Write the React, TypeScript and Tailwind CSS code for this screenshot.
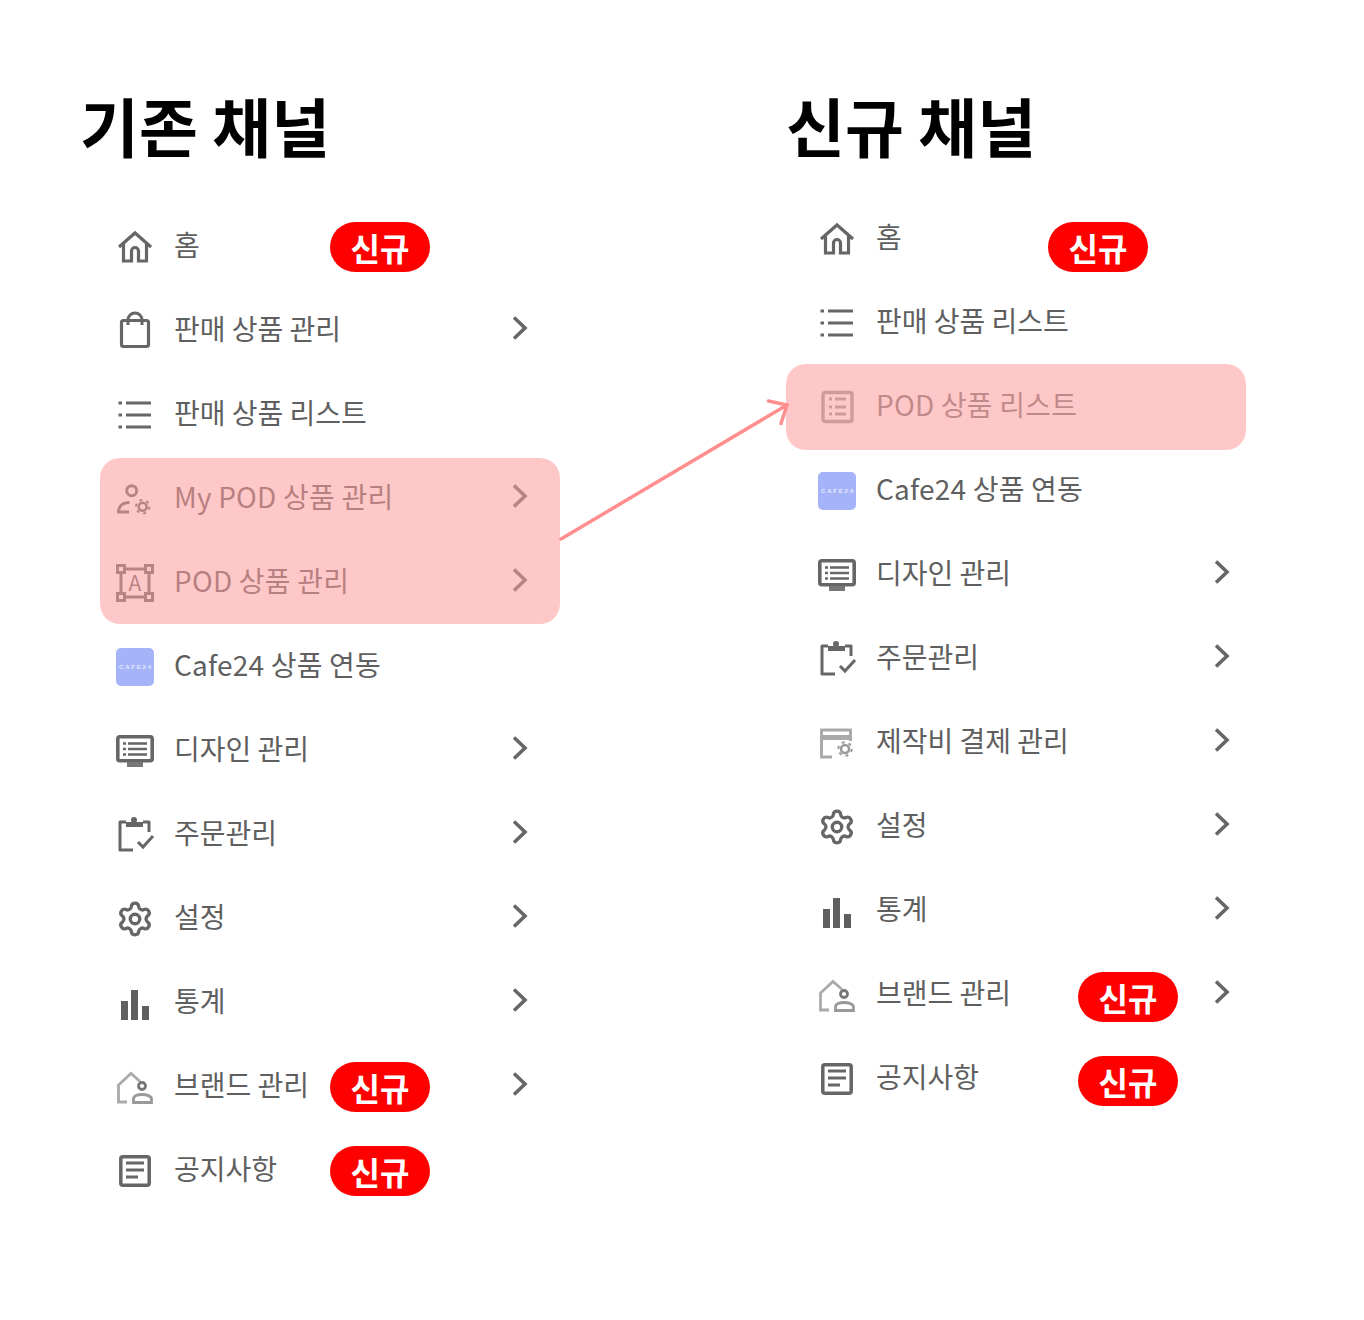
import React from "react";
import { Settings } from "lucide-react";

const S = ({ children, className = "" }: { children: React.ReactNode; className?: string }) => (
  <svg viewBox="0 0 38 38" className={`w-[38px] h-[38px] shrink-0 overflow-visible ${className}`} fill="none" stroke="#666" strokeWidth="3">
    {children}
  </svg>
);

const Cog = ({ cx, cy, color }: { cx: number; cy: number; color: string }) => (
  <g stroke={color}>
    <circle cx={cx} cy={cy} r="4" strokeWidth="2.600" />
    <circle cx={cx} cy={cy} r="6.700" strokeWidth="2" strokeDasharray="3 4.020" />
  </g>
);

const Home = () => (
  <S>
    <path d="M3 19 19 5 35 19M7.500 16v17h8V23a3.500 3.500 0 0 1 7 0v10h8V16" strokeWidth="3.200" />
  </S>
);
const Bag = () => (
  <S>
    <rect x="5.500" y="8.500" width="27" height="26" rx="2" strokeWidth="3.200" />
    <path d="M12 13V8a7 7 0 0 1 14 0v5" strokeWidth="3" />
  </S>
);
const ListI = () => (
  <S>
    <path d="M10 7h25M10 19h25M10 31h25" strokeWidth="3.200" />
    <path d="M2.500 7h3.500M2.500 19h3.500M2.500 31h3.500" strokeWidth="3.200" />
  </S>
);
const UserGear = () => (
  <S>
    <circle cx="15.700" cy="10.700" r="5" strokeWidth="3" />
    <path d="M13 32H2.500c0-6 4.500-9.500 11-9.500" strokeWidth="3" />
    <Cog cx={26.700} cy={26.700} color="#666" />
  </S>
);
const FrameA = () => (
  <S>
    <g strokeWidth="3">
      <rect x="1.500" y="1.500" width="7" height="7" />
      <rect x="29.500" y="1.500" width="7" height="7" />
      <rect x="1.500" y="29.500" width="7" height="7" />
      <rect x="29.500" y="29.500" width="7" height="7" />
      <path d="M9 5h20M9 33h20M5 9v20M33 9v20" />
    </g>
    <text x="19" y="26.500" textAnchor="middle" fontSize="21" fill="#666" stroke="none" fontFamily="'Noto Sans CJK KR',sans-serif">A</text>
  </S>
);
const Cafe = () => (
  <S>
    <rect x="0" y="0" width="38" height="38" rx="5" fill="#a5b4f8" stroke="none" />
    <text x="3" y="21" textLength="32" lengthAdjust="spacing" fontSize="6" fontWeight="700" fill="#e6eafe" stroke="none" fontFamily="'Liberation Sans',sans-serif">CAFE24</text>
  </S>
);
const Monitor = () => (
  <S>
    <rect x="1.800" y="4.800" width="34.400" height="24" rx="2" strokeWidth="3.600" />
    <rect x="11" y="30" width="16" height="5" fill="#777" stroke="none" />
    <path d="M12 11.500h19M12 17h19M12 22.500h19M7 11.500h3M7 17h3M7 22.500h3" strokeWidth="2.500" />
  </S>
);
const Clip = () => (
  <S>
    <path d="M10 6H4v28h13M27 6h6v10" strokeWidth="3" strokeLinejoin="round" />
    <path d="M10 6h17v5H10z" fill="#666" stroke="none" />
    <circle cx="18" cy="4" r="3" fill="#666" stroke="none" />
    <path d="m22 26 5 5 10-11" strokeWidth="3" />
  </S>
);
const Gear = () => <Settings size={38} color="#666" strokeWidth={2.100} className="shrink-0" />;
const Bars = () => (
  <S>
    <rect x="5" y="17" width="7" height="19" fill="#5f5f5f" stroke="none" />
    <rect x="15" y="6" width="7" height="30" fill="#5f5f5f" stroke="none" />
    <rect x="26" y="22" width="7" height="14" fill="#5f5f5f" stroke="none" />
  </S>
);
const Brand = () => (
  <S>
    <path d="M11 34H2.500V17L15 5.500l9 8" stroke="#aaa" strokeWidth="2.800" />
    <circle cx="26" cy="18" r="3.500" stroke="#777" strokeWidth="2.800" />
    <path d="M17.500 34.500V31c0-3 4-4.500 8.500-4.500s9.500 1.500 9.500 4.500v3.500z" stroke="#999" strokeWidth="2.800" />
  </S>
);
const Notice = () => (
  <S>
    <rect x="4.800" y="4.800" width="28.400" height="28.400" rx="2" strokeWidth="3.500" />
    <path d="M10 11h18M10 18h18M10 25h12" strokeWidth="3" />
  </S>
);
const PodList = () => (
  <S>
    <rect x="5" y="4.500" width="29" height="29" rx="2" stroke="#999" strokeWidth="3.400" />
    <path d="M17 11h11M17 19h11M17 26h11M11 11h3M11 19h3M11 26h3" stroke="#999" strokeWidth="3" />
  </S>
);
const CardGear = () => (
  <S>
    <path d="M14 33H3.500V6h29v11" stroke="#aaa" strokeWidth="3" />
    <rect x="3" y="11" width="30" height="5" fill="#aaa" stroke="none" />
    <Cog cx={27} cy={25} color="#999" />
  </S>
);

const Chevron = () => (
  <svg viewBox="0 0 20 28" className="w-[20px] h-[28px] ml-auto mr-[30px] mt-[-6px] shrink-0" fill="none" stroke="#666" strokeWidth="3.600">
    <path d="m4 3.500 11 10.500L4 24.500" />
  </svg>
);

const Badge = ({ left, top }: { left: number; top: number }) => (
  <span
    style={{ left, top }}
    className="absolute w-[100px] h-[50px] rounded-full bg-[#ff0000] text-white text-[32px] font-bold flex items-center justify-center leading-none"
  >
    신규
  </span>
);

type Item = { icon: React.ReactNode; label: string; chev?: boolean; badge?: [number, number]; faded?: boolean; latin?: boolean };

const Row = ({ icon, label, chev, badge, faded, latin }: Item) => (
  <div className="relative h-[84px] flex items-center pl-[16px]">
    {icon}
    <span
      className={`ml-[20px] text-[28px] leading-none mt-[-7px] whitespace-nowrap ${faded ? "text-[#777]" : "text-[#5f5f5f]"} ${latin ? "tracking-[0.2px]" : ""}`}
    >
      {label}
    </span>
    {chev && <Chevron />}
    {badge && <Badge left={badge[0]} top={badge[1]} />}
  </div>
);

const left: Item[] = [
  { icon: <Home />, label: "홈", badge: [230, 17] },
  { icon: <Bag />, label: "판매 상품 관리", chev: true },
  { icon: <ListI />, label: "판매 상품 리스트" },
  { icon: <UserGear />, label: "My POD 상품 관리", chev: true, latin: true },
  { icon: <FrameA />, label: "POD 상품 관리", chev: true, latin: true },
  { icon: <Cafe />, label: "Cafe24 상품 연동", latin: true },
  { icon: <Monitor />, label: "디자인 관리", chev: true },
  { icon: <Clip />, label: "주문관리", chev: true },
  { icon: <Gear />, label: "설정", chev: true },
  { icon: <Bars />, label: "통계", chev: true },
  { icon: <Brand />, label: "브랜드 관리", chev: true, badge: [230, 17] },
  { icon: <Notice />, label: "공지사항", badge: [230, 17] },
];

const right: Item[] = [
  { icon: <Home />, label: "홈", badge: [246, 25] },
  { icon: <ListI />, label: "판매 상품 리스트" },
  { icon: <PodList />, label: "POD 상품 리스트", faded: true, latin: true },
  { icon: <Cafe />, label: "Cafe24 상품 연동", latin: true },
  { icon: <Monitor />, label: "디자인 관리", chev: true },
  { icon: <Clip />, label: "주문관리", chev: true },
  { icon: <CardGear />, label: "제작비 결제 관리", chev: true },
  { icon: <Gear />, label: "설정", chev: true },
  { icon: <Bars />, label: "통계", chev: true },
  { icon: <Brand />, label: "브랜드 관리", chev: true, badge: [276, 19] },
  { icon: <Notice />, label: "공지사항", badge: [276, 19] },
];

export default function App() {
  return (
    <div className="relative w-[1364px] h-[1320px] bg-white overflow-hidden flex font-['Noto_Sans_CJK_KR',sans-serif]">
      <div className="ml-[80px] w-[706px] pt-[84px]">
        <h1 className="text-[64px] leading-[80px] font-bold text-black whitespace-nowrap">기존 채널</h1>
        <div className="ml-[20px] w-[460px] mt-[41px]">
          {left.map((it) => (
            <Row key={it.label} {...it} />
          ))}
        </div>
      </div>
      <div className="w-[476px] pt-[84px]">
        <h1 className="text-[64px] leading-[80px] font-bold text-black whitespace-nowrap">신규 채널</h1>
        <div className="ml-[16px] w-[460px] mt-[33px]">
          {right.map((it) => (
            <Row key={it.label} {...it} />
          ))}
        </div>
      </div>
      <div className="absolute left-[100px] top-[458px] w-[460px] h-[166px] rounded-[20px] bg-[#ff9b9b]/55" />
      <div className="absolute left-[786px] top-[364px] w-[460px] h-[86px] rounded-[20px] bg-[#ff9b9b]/55" />
      <svg className="absolute left-0 top-0 w-[1364px] h-[1320px] pointer-events-none" viewBox="0 0 1364 1320" fill="none" stroke="#ff8e8e" strokeWidth="3.500" strokeLinecap="round">
        <path d="M561 539 787 405M768.500 401 787 405l-6 18.500" />
      </svg>
    </div>
  );
}
